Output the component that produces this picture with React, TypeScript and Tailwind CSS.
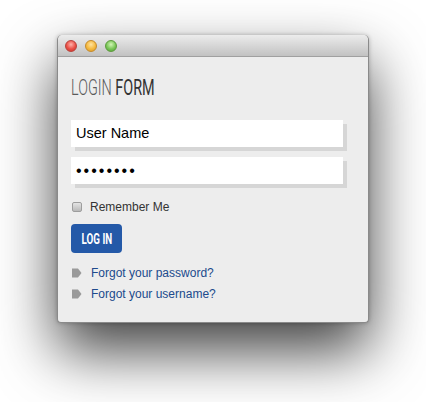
import React from "react";

function Tag() {
  return (
    <svg width="10" height="10" viewBox="0 0 10 10" className="shrink-0">
      <polygon points="0,0.5 6,0.5 9.5,5 6,9.5 0,9.5" fill="#9a9a9a" />
    </svg>
  );
}

export default function App() {
  return (
    <div className="w-[426px] h-[402px] bg-white overflow-hidden pt-[35px] pl-[57px]">
      <div className="w-[312px] h-[288px] bg-[#ededed] rounded-t-[5px] rounded-b-[4px] border border-t-0 border-[#8a8a8a] shadow-[0_28px_60px_rgba(0,0,0,0.75),0_0_4px_rgba(0,0,0,0.25)] flex flex-col">
        <div className="h-[22px] shrink-0 rounded-t-[5px] bg-gradient-to-b from-[#ececec] to-[#c2c2c2] border-b border-[#a0a0a0] flex items-center pl-[7px] gap-[8px]">
          <div className="w-[12px] h-[12px] rounded-full border border-[#b8413a] bg-[radial-gradient(circle_at_50%_35%,#ffb2aa,#ea4f45_55%,#c8332b)]" />
          <div className="w-[12px] h-[12px] rounded-full border border-[#c58a2a] bg-[radial-gradient(circle_at_50%_35%,#ffe3a0,#f5b93d_55%,#d8962a)]" />
          <div className="w-[12px] h-[12px] rounded-full border border-[#5d9a3c] bg-[radial-gradient(circle_at_50%_35%,#d2f5b5,#79c656_55%,#4f9e37)]" />
        </div>
        <div className="pl-[13px] flex flex-col">
          <div className="mt-[19px] h-[22px] leading-[22px] text-[22.5px] font-['Roboto',sans-serif] whitespace-nowrap">
            <span className="inline-block origin-left scale-x-[0.64]">
              <span className="text-[#5a5a5a] font-light">LOGIN </span>
              <span className="text-[#333] font-normal">FORM</span>
            </span>
          </div>
          <div className="mt-[22px] w-[272px] h-[27px] bg-white shadow-[4px_4px_0_#d6d6d6] flex items-center pl-[5px] text-[14.5px] text-black font-['Liberation_Sans',Arial,sans-serif]">
            User Name
          </div>
          <div className="mt-[10px] w-[272px] h-[27px] bg-white shadow-[4px_4px_0_#d6d6d6] flex items-center pl-[5px] text-[16px] tracking-[2px] text-black font-['Liberation_Sans',Arial,sans-serif]">
            ••••••••
          </div>
          <div className="mt-[15px] h-[16px] flex items-center gap-[8px] pl-[1px]">
            <div className="w-[10px] h-[10px] rounded-[2px] border border-[#9d9d9d] bg-gradient-to-b from-[#e4e4e4] to-[#b9b9b9]" />
            <span className="text-[12px] text-[#333] font-['Liberation_Sans',Arial,sans-serif]">Remember Me</span>
          </div>
          <div className="mt-[9px] w-[51px] h-[29px] rounded-[4px] bg-[#2459a8] flex items-center justify-center">
            <span className="inline-block scale-x-[0.7] text-white text-[14px] font-bold font-['Roboto',sans-serif] leading-none whitespace-nowrap">
              LOG IN
            </span>
          </div>
          <div className="mt-[10px] flex flex-col gap-[1px] pl-[1px]">
            <div className="h-[20px] flex items-center gap-[9px]">
              <Tag />
              <span className="text-[12px] text-[#204a8c] font-['Liberation_Sans',Arial,sans-serif]">Forgot your password?</span>
            </div>
            <div className="h-[20px] flex items-center gap-[9px]">
              <Tag />
              <span className="text-[12px] text-[#204a8c] font-['Liberation_Sans',Arial,sans-serif]">Forgot your username?</span>
            </div>
          </div>
        </div>
      </div>
    </div>
  );
}
